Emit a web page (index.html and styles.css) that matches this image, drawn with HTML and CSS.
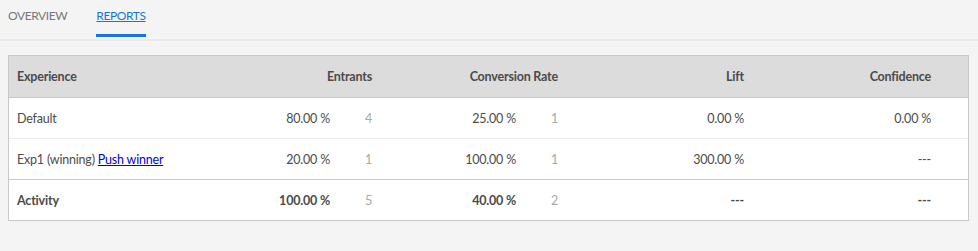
FILE: index.html
```html
<!DOCTYPE html>
<html>
<head>
<meta charset="utf-8">
<link rel="stylesheet" href="styles.css">
</head>
<body>
<nav class="tabs">
  <a class="tab">OVERVIEW</a>
  <a class="tab active">REPORTS</a>
</nav>
<section class="report">
  <div class="row head">
    <div class="cell exp">Experience</div>
    <div class="cell num">Entrants</div>
    <div class="cell num">Conversion Rate</div>
    <div class="cell num">Lift</div>
    <div class="cell num">Confidence</div>
  </div>
  <div class="row">
    <div class="cell exp">Default</div>
    <div class="cell num"><span class="pct">80.00 %</span><span class="cnt">4</span></div>
    <div class="cell num"><span class="pct">25.00 %</span><span class="cnt">1</span></div>
    <div class="cell num">0.00 %</div>
    <div class="cell num">0.00 %</div>
  </div>
  <div class="row">
    <div class="cell exp">Exp1 (winning) <a class="push" href="#">Push winner</a></div>
    <div class="cell num"><span class="pct">20.00 %</span><span class="cnt">1</span></div>
    <div class="cell num"><span class="pct">100.00 %</span><span class="cnt">1</span></div>
    <div class="cell num">300.00 %</div>
    <div class="cell num">---</div>
  </div>
  <div class="row total">
    <div class="cell exp">Activity</div>
    <div class="cell num"><span class="pct">100.00 %</span><span class="cnt">5</span></div>
    <div class="cell num"><span class="pct">40.00 %</span><span class="cnt">2</span></div>
    <div class="cell num">---</div>
    <div class="cell num">---</div>
  </div>
</section>
</body>
</html>
```
FILE: styles.css
```css
html, body {
  margin: 0;
  padding: 0;
  background: #f4f4f4;
}
body {
  font-family: Lato, "Open Sans", sans-serif;
  font-size: 12.5px;
  letter-spacing: -0.2px;
  color: #4b4b4b;
}
.tabs {
  display: flex;
  gap: 29px;
  padding: 0 8px;
  height: 39px;
  border-bottom: 2px solid #ebebeb;
}
.tab {
  display: flex;
  align-items: center;
  height: 31px;
  padding-bottom: 3px;
  color: #777;
  font-size: 12px;
  letter-spacing: -0.4px;
  border-bottom: 3px solid transparent;
  margin-bottom: -1px;
}
.tab.active {
  color: #1473e6;
  text-decoration: underline;
  border-bottom-color: #1473e6;
}
.report {
  margin: 14px 9px 0 8px;
  border: 1px solid #c8c8c8;
  background: #fff;
}
.row {
  display: grid;
  grid-template-columns: 214px 186px 186px 186px 1fr;
  height: 40px;
  border-top: 1px solid #ececec;
}
.row.head {
  height: 41px;
  border-top: none;
  background: #dcdcdc;
  font-weight: bold;
  border-bottom: 1px solid #c8c8c8;
}
.row.head + .row {
  border-top: none;
}
.row.total {
  border-top: 1px solid #c8c8c8;
  font-weight: bold;
}
.cell {
  display: flex;
  align-items: center;
}
.cell.exp {
  padding-left: 8px;
  white-space: pre;
}
.cell.num {
  justify-content: flex-end;
  padding-right: 37px;
}
.pct {
  text-align: right;
}
.cnt {
  width: 42px;
  text-align: right;
  color: #a8a8a8;
  font-weight: normal;
}
.push {
  color: #0000ee;
  text-decoration: underline;
}
```
